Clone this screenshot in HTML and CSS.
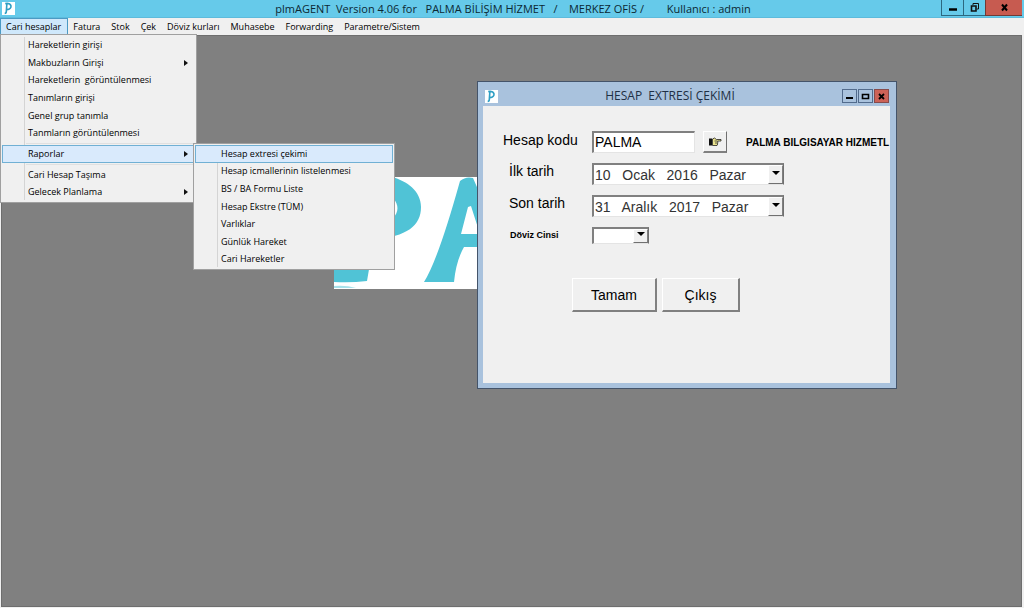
FILE: index.html
```html
<!DOCTYPE html>
<html lang="tr">
<head>
<meta charset="utf-8">
<title>plmAGENT</title>
<link rel="stylesheet" href="styles.css">
</head>
<body>
<div class="app">
  <header class="titlebar">
    <svg class="app-icon" viewBox="0 0 12 12" aria-hidden="true"><rect width="12" height="12" fill="#fff"/><path d="M3 1.500c6-1.500 7.500 5 1.500 5.500M4.500 1.500L4 8.500Q4 10.500 2.500 10.500" fill="none" stroke="#2f9fc4" stroke-width="1.500"/></svg>
    <h1 class="title">plmAGENT&nbsp; Version 4.06 for&nbsp;&nbsp; PALMA BİLİŞİM HİZMET&nbsp;&nbsp; /&nbsp;&nbsp;&nbsp; MERKEZ OFİS /&nbsp;&nbsp;&nbsp;&nbsp;&nbsp;&nbsp;&nbsp; Kullanıcı : admin</h1>
    <div class="window-buttons">
      <button class="wb" type="button" aria-label="Simge durumuna küçült"><svg width="9" height="9" viewBox="0 0 9 9"><path d="M1 6.500h8" stroke="#000" stroke-width="2.500"/></svg></button>
      <button class="wb" type="button" aria-label="Geri yükle"><svg width="9" height="9" viewBox="0 0 9 9" fill="none" stroke="#111"><path d="M3 2V.5h5.500V6H7"/><path d="M1.500 3H6v5H1.500z" stroke-width="1.600"/></svg></button>
      <button class="wb wb-close" type="button" aria-label="Kapat"><svg width="9" height="9" viewBox="0 0 9 9"><path d="M2 1.500l5 6M7 1.500l-5 6" stroke="#000" stroke-width="2"/></svg></button>
    </div>
  </header>
  <nav class="menubar">
    <button class="top-item open" type="button">Cari hesaplar</button>
    <button class="top-item" type="button">Fatura</button>
    <button class="top-item" type="button">Stok</button>
    <button class="top-item" type="button">Çek</button>
    <button class="top-item" type="button">Döviz kurları</button>
    <button class="top-item" type="button">Muhasebe</button>
    <button class="top-item" type="button">Forwarding</button>
    <button class="top-item" type="button">Parametre/Sistem</button>
  </nav>
  <main class="workspace">
    <svg class="backdrop" viewBox="0 0 150 112" aria-hidden="true">
      <rect width="150" height="112" fill="#fff"/>
      <g fill="#50c3d6">
        <path d="M8 0H58C73 4 87 14 87 30C87 49 73 59 40 63L33 104Q17 106 0 105V90Z"/>
        <path d="M32 17H51C70 23 68 46 40 48Z" fill="#fff"/>
        <path d="M126 4Q132-1 139 1L150 26V70H130Q122 84 120 105H90Q104 83 126 4Z"/>
        <path d="M134 30L127 57H150L145 54L137 29Z" fill="#fff"/>
        <path d="M0 109Q12 108 22 111H0Z" opacity=".5"/>
      </g>
    </svg>
  </main>

  <div class="menu main-menu">
    <div class="group six">
      <button class="item" type="button">Hareketlerin girişi</button>
      <button class="item sub" type="button">Makbuzların Girişi</button>
      <button class="item" type="button">Hareketlerin&nbsp; görüntülenmesi</button>
      <button class="item" type="button">Tanımların girişi</button>
      <button class="item" type="button">Genel grup tanımla</button>
      <button class="item" type="button">Tanmların görüntülenmesi</button>
    </div>
    <div class="group one"><button class="item sub active" type="button">Raporlar</button></div>
    <div class="group two">
      <button class="item" type="button">Cari Hesap Taşıma</button>
      <button class="item sub" type="button">Gelecek Planlama</button>
    </div>
  </div>
  <div class="menu sub-menu">
    <div class="group seven">
      <button class="item active" type="button">Hesap extresi çekimi</button>
      <button class="item" type="button">Hesap icmallerinin listelenmesi</button>
      <button class="item" type="button">BS / BA Formu Liste</button>
      <button class="item" type="button">Hesap Ekstre (TÜM)</button>
      <button class="item" type="button">Varlıklar</button>
      <button class="item" type="button">Günlük Hareket</button>
      <button class="item" type="button">Cari Hareketler</button>
    </div>
  </div>

  <section class="dialog" aria-labelledby="dialog-title">
    <header class="dialog-bar">
      <svg class="app-icon" viewBox="0 0 12 12" aria-hidden="true"><rect width="12" height="12" fill="#fff"/><path d="M3 1.500c6-1.500 7.500 5 1.500 5.500M4.500 1.500L4 8.500Q4 10.500 2.500 10.500" fill="none" stroke="#2f9fc4" stroke-width="1.500"/></svg>
      <h2 class="dialog-title" id="dialog-title">HESAP&nbsp; EXTRESİ ÇEKİMİ</h2>
      <div class="dialog-buttons">
        <button class="db" type="button" aria-label="Simge durumuna küçült"><svg width="9" height="9" viewBox="0 0 9 9"><path d="M1 6h7" stroke="#000" stroke-width="2"/></svg></button>
        <button class="db" type="button" aria-label="Ekranı kapla"><svg width="9" height="9" viewBox="0 0 9 9"><path d="M1.500 2.500h6v4h-6z" fill="none" stroke="#000" stroke-width="1.600"/></svg></button>
        <button class="db db-close" type="button" aria-label="Pencereyi kapat"><svg width="9" height="9" viewBox="0 0 9 9"><path d="M2 2l5 5M7 2l-5 5" stroke="#000" stroke-width="1.800"/></svg></button>
      </div>
    </header>
    <form class="form">
      <div class="row">
        <label class="label" for="kod">Hesap kodu</label>
        <input class="field code" id="kod" type="text" value="PALMA">
        <button class="pick" type="button" aria-label="Hesap seç"><svg width="14" height="10" viewBox="0 0 14 10"><path d="M1 1.500h3v7H1z" fill="#111"/><path d="M4.500 2l2-1 2 1.500h4.500v1.500H9.500l.5 1-.5 1 .2 1-.7 1.500H4.500z" fill="#ece48e" stroke="#222" stroke-width=".8"/><path d="M6.500 4h2.500M7 6h2" stroke="#333" stroke-width=".8"/></svg></button>
        <output class="account" for="kod">PALMA BILGISAYAR HIZMETL</output>
      </div>
      <div class="row">
        <label class="label inset" for="ilk">İlk tarih</label>
        <span class="combo date"><select class="field" id="ilk"><option>10&nbsp;&nbsp; Ocak&nbsp;&nbsp; 2016&nbsp;&nbsp; Pazar</option></select></span>
      </div>
      <div class="row">
        <label class="label inset" for="son">Son tarih</label>
        <span class="combo date"><select class="field" id="son"><option>31&nbsp;&nbsp; Aralık&nbsp;&nbsp; 2017&nbsp;&nbsp; Pazar</option></select></span>
      </div>
      <div class="row">
        <label class="label inset small" for="doviz">Döviz Cinsi</label>
        <span class="combo currency"><select class="field" id="doviz"><option></option></select></span>
      </div>
      <div class="actions">
        <button class="action wide" type="button">Tamam</button>
        <button class="action" type="button">Çıkış</button>
      </div>
    </form>
  </section>
</div>
</body>
</html>
```
FILE: styles.css
```css
* { box-sizing: border-box; }
body { margin: 0; font-family: "Open Sans", "Noto Sans", sans-serif; color: #000; }
button, input, select { font: inherit; color: inherit; margin: 0; padding: 0; border-radius: 0; }
.app { position: relative; display: flex; flex-direction: column; min-height: 100vh; background: #f0f0f0; }

.titlebar { display: grid; grid-template-columns: 1fr auto 1fr; align-items: center; height: 18px; padding-left: 2px; background: #66caea; border-bottom: 1px solid #5dbbdc; }
.app-icon { flex: none; width: 13px; height: 13px; }
.title { margin: 0; font-size: 11px; line-height: 16px; font-weight: 400; white-space: nowrap; color: #0c2833; }
.window-buttons { display: flex; align-self: start; justify-self: end; padding-right: 2px; }
.wb { display: flex; align-items: center; justify-content: center; width: 22px; height: 16px; border: 1px solid #2c6880; border-width: 0 0 1px 1px; background: transparent; }
.wb-close { width: 37px; background: #c75b50; border-color: #713a35; }

.menubar { display: flex; height: 17px; background: #f0f0f0; }
.top-item { border: 1px solid transparent; background: transparent; padding: 0 5px 0 4px; font-size: 9px; line-height: 14px; white-space: nowrap; }
.top-item.open { padding: 0 6px 0 5px; background: #cfe8fb; border-color: #4b9ac4; }

.workspace { flex: 1; margin: 0 2px 1px 1px; background: #808080; border: 1px solid #6e6e6e; }
.backdrop { position: absolute; left: 334px; top: 177px; width: 150px; height: 112px; }

.menu { position: absolute; background: #f0f0f0; border: 1px solid #a0a0a0; padding: 1px; }
.menu::before { content: ""; position: absolute; left: 23px; top: 2px; bottom: 2px; border-left: 1px solid #d4d4d4; }
.main-menu { left: 0; top: 34px; width: 197px; }
.sub-menu { left: 193px; top: 143px; width: 202px; }
.group { position: relative; display: flex; flex-direction: column; }
.group + .group { margin-top: 3px; }
.group + .group::before { content: ""; position: absolute; left: 24px; right: 0; top: -2px; border-top: 1px solid #e0e0e0; }
.six { height: 106px; }
.one { height: 18px; }
.two { height: 35px; }
.seven { height: 123px; }
.item { flex: 1; display: flex; align-items: center; justify-content: space-between; border: 1px solid transparent; background: transparent; padding: 0 6px 0 25px; font-size: 9px; line-height: 12px; text-align: left; white-space: nowrap; }
.item.active { background: #d9eafc; border-color: #70b0d4; }
.item.sub::after { content: ""; border: 3px solid transparent; border-left: 4px solid #111; border-right: 0; }

.dialog { position: absolute; left: 477px; top: 81px; width: 420px; padding: 0 6px 5px 5px; background: #a9c2dd; border: 1px solid #44546a; }
.dialog-bar { display: flex; align-items: center; height: 24px; padding: 4px 1px 0 2px; }
.dialog-title { flex: 1; margin: 0; font-size: 12px; line-height: 16px; font-weight: 400; text-align: center; white-space: nowrap; color: #1f3044; }
.dialog-buttons { display: flex; gap: 1px; }
.db { display: flex; align-items: center; justify-content: center; width: 15px; height: 14px; border: 1px solid #526b8c; background: transparent; }
.db-close { background: #cc6257; border-color: #874a4a; }

.form { display: flex; flex-direction: column; gap: 10px; min-height: 277px; padding: 25px 0 20px; background: #f0f0f0; font-family: "Liberation Sans", Arial, sans-serif; font-size: 14px; }
.row { display: flex; align-items: center; }
.label { flex: none; width: 109px; padding: 0 0 4px 20px; line-height: 16px; }
.label.inset { padding-left: 26px; padding-bottom: 6px; }
.label.small { font-size: 9px; line-height: 12px; font-weight: 700; padding: 0 0 2px 27px; }
.field { height: 22px; background: #fff; border: 1px solid #e4e4e4; border-top: 2px solid #808080; border-left: 2px solid #808080; padding: 0 1px; appearance: none; }
.code { width: 103px; padding: 0 1px 2px; }
.pick { display: flex; align-items: center; justify-content: center; width: 24px; height: 22px; margin: 0 19px 0 8px; background: #f0f0f0; border: 1px solid #fff; border-right-color: #707070; border-bottom: 2px solid #808080; }
.account { font-size: 10px; font-weight: 700; white-space: nowrap; }
.combo { position: relative; display: flex; }
.combo .field { width: 100%; border-right: 1px solid #707070; color: #333; }
.combo::before { content: ""; position: absolute; right: 1px; top: 2px; bottom: 1px; width: 13px; background: #f0f0f0; border: 1px solid #fff; border-right-color: #808080; border-bottom-color: #707070; pointer-events: none; }
.combo::after { content: ""; position: absolute; right: 4px; top: 0; bottom: 0; margin: auto; width: 0; height: 3px; border: 4px solid transparent; border-top-color: #000; border-bottom: 0; pointer-events: none; }
.date { width: 192px; }
.currency { width: 57px; }
.currency .field { height: 17px; }
.currency { background: #fff; }
.actions { display: flex; gap: 5px; padding: 24px 0 0 89px; }
.action { width: 78px; height: 34px; background: #f0f0f0; border: 1px solid #fff; border-right: 2px solid #808080; border-bottom: 2px solid #808080; }
.wide { width: 85px; }
```
